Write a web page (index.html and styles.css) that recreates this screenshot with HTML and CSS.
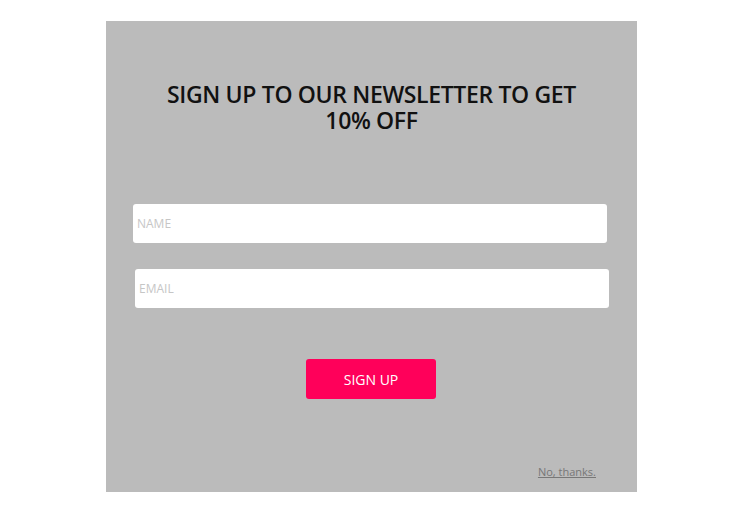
FILE: index.html
```html
<!DOCTYPE html>
<html>
<head>
<meta charset="utf-8">
<link rel="stylesheet" href="styles.css">
</head>
<body>
<div class="popup">
  <h1 class="title">SIGN UP TO OUR NEWSLETTER TO GET<br>10% OFF</h1>
  <form class="form">
    <input class="field field-name" type="text" placeholder="NAME">
    <input class="field field-email" type="text" placeholder="EMAIL">
    <button class="btn" type="button">SIGN UP</button>
  </form>
  <div class="footer"><a class="no-thanks" href="#">No, thanks.</a></div>
</div>
</body>
</html>
```
FILE: styles.css
```css
html, body { margin: 0; padding: 0; background: #fff; }
body { font-family: "Open Sans", "Liberation Sans", sans-serif; }
.popup {
  margin: 21px 0 0 106px;
  width: 531px;
  height: 471px;
  background: #bbbbbb;
  box-sizing: border-box;
  display: flex;
  flex-direction: column;
}
.title {
  margin: 60px 0 0 0;
  text-align: center;
  font-size: 23px;
  line-height: 26px;
  font-weight: 600;
  color: #111;
  letter-spacing: -0.35px;
}
.form {
  display: flex;
  flex-direction: column;
  margin-top: 71px;
}
.field {
  box-sizing: border-box;
  height: 39px;
  width: 474px;
  border: none;
  border-radius: 3px;
  background: #fff;
  padding: 0 4px;
  font-family: "Open Sans", sans-serif;
  font-size: 12px;
  outline: none;
}
.field::placeholder { color: #c6c6c6; }
.field-name { margin-left: 27px; }
.field-email { margin-left: 29px; margin-top: 26px; }
.btn {
  align-self: flex-start;
  margin: 51px 0 0 200px;
  width: 130px;
  height: 40px;
  border: none;
  border-radius: 3px;
  background: #ff005a;
  color: #fff;
  font-family: "Open Sans", sans-serif;
  font-size: 14px;
}
.footer {
  margin-top: auto;
  padding: 0 41px 13px 0;
  display: flex;
  justify-content: flex-end;
}
.no-thanks {
  color: #777;
  font-size: 11px;
  text-decoration: underline;
}
```
